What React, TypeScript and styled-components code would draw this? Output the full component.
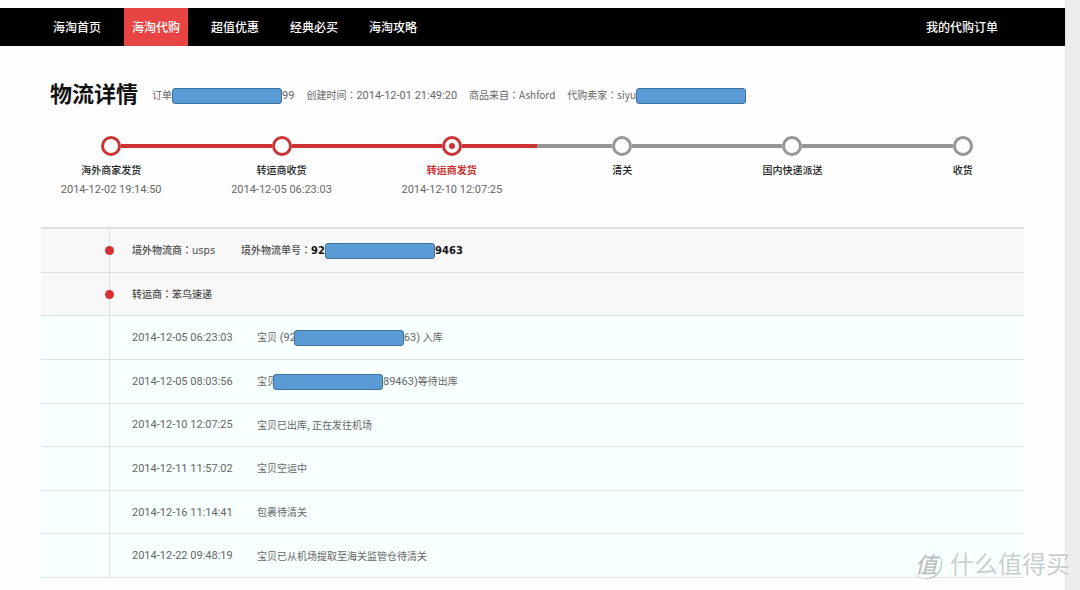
import React from "react";
import styled, { createGlobalStyle } from "styled-components";

const GlobalStyle = createGlobalStyle`
  * { box-sizing: border-box; }
  body {
    margin: 0;
    background: #fefefe;
    color: #666;
    font: 400 10px/20px "Noto Sans CJK SC", sans-serif;
  }
`;

const RED = "#cb3335";
const GRAY = "#969696";

const Page = styled.div`
  position: relative;
  display: flex;
  min-height: 100vh;
  overflow: hidden;
`;

const Content = styled.div`
  flex: 1;
  min-width: 0;
  padding-top: 8px;
`;

const Gutter = styled.div`
  width: 15px;
  background: #ededed;
  border-left: 1px solid #e2e2e2;
`;

const Nav = styled.nav`
  display: flex;
  gap: 15px;
  height: 38px;
  padding: 0 59px 0 45px;
  background: #000;
`;

const NavLink = styled.a<{ $active?: boolean; $end?: boolean }>`
  padding: 0 8px;
  margin-left: ${(p) => (p.$end ? "auto" : "0")};
  background: ${(p) => (p.$active ? "#e84443" : "transparent")};
  color: #fff;
  font-size: 12px;
  font-weight: 500;
  line-height: 38px;
  text-decoration: none;
  white-space: nowrap;
`;

const Header = styled.header`
  display: flex;
  align-items: center;
  gap: 14px;
  padding: 30px 0 0 50px;
`;

const Title = styled.h1`
  margin: 0;
  color: #111;
  font-size: 22px;
  font-weight: 700;
  line-height: 32px;
  white-space: nowrap;
`;

const MetaList = styled.div`
  display: flex;
  gap: 12px;
  padding-top: 6px;
  white-space: nowrap;
`;

const Latin = styled.span`
  font-family: Roboto, sans-serif;
  font-size: 11px;
`;

const Colon = styled.span`
  font-family: "Noto Sans CJK TC", sans-serif;
`;

const Redaction = styled.span<{ $overlap?: number }>`
  position: relative;
  display: inline-block;
  width: 110px;
  height: 16px;
  margin-left: ${(p) => -(p.$overlap ?? 0)}px;
  border: 1px solid #41719c;
  border-radius: 3px;
  background: #5b9bd5;
  vertical-align: middle;
`;

const Steps = styled.ol`
  display: flex;
  margin: 28px 17px 0 26px;
  padding: 0;
  list-style: none;
`;

const Step = styled.li`
  flex: 1;
  text-align: center;
  line-height: 19px;
`;

const Track = styled.div`
  display: flex;
  align-items: center;
  margin-bottom: 4px;
`;

const Segment = styled.span<{ $color: string }>`
  flex: 1;
  height: 4px;
  background: ${(p) => p.$color};
`;

const Ring = styled.span<{ $color: string }>`
  display: flex;
  align-items: center;
  justify-content: center;
  width: 20px;
  height: 20px;
  border: 3px solid ${(p) => p.$color};
  border-radius: 50%;
`;

const RingDot = styled.span`
  width: 6px;
  height: 6px;
  border-radius: 50%;
  background: ${RED};
`;

const StepName = styled.div<{ $current: boolean }>`
  color: ${(p) => (p.$current ? RED : "#222")};
  font-weight: ${(p) => (p.$current ? 700 : 500)};
`;

const Log = styled.table`
  width: calc(100% - 82px);
  height: 351px;
  margin: 28px 41px 0;
  border-top: 2px solid #dedede;
  border-collapse: separate;
  border-spacing: 0;
  table-layout: fixed;
`;

const Row = styled.tr<{ $kind: "carrier" | "event" }>`
  background: ${(p) => (p.$kind === "carrier" ? "#f8f8f8" : "#f8ffff")};
`;

const Cell = styled.td`
  height: 42px;
  padding: 0;
  border-bottom: 1px solid #dde2e2;
  white-space: nowrap;
`;

const RailCell = styled(Cell)`
  position: relative;
  border-right: 1px solid #dde2e2;
`;

const RailDot = styled.span`
  position: absolute;
  top: 50%;
  right: -5px;
  width: 9px;
  height: 9px;
  margin-top: -4px;
  border-radius: 50%;
  background: #d62f33;
`;

const TimeCell = styled(Cell)`
  padding-left: 22px;
`;

const Carrier = styled.div`
  display: flex;
  gap: 26px;
  color: #4c4c4c;
  font-weight: 500;
`;

const CarrierCode = styled.span`
  font-family: "DejaVu Sans", sans-serif;
`;

const TrackingNo = styled.strong`
  color: #111;
  font-family: "DejaVu Sans", sans-serif;
`;

const Watermark = styled.div`
  position: absolute;
  right: 10px;
  bottom: 10px;
  display: flex;
  align-items: center;
  gap: 9px;
  color: #c9cecf;
  font-size: 24px;
  line-height: 34px;
  text-shadow: -1px -1px 0 #fff;
`;

const Seal = styled.span`
  display: flex;
  align-items: center;
  justify-content: center;
  width: 30px;
  height: 30px;
  border: 1px solid #fff;
  border-radius: 50%;
  box-shadow: 1px 1px 1px #b9bfc0;
  color: #bcc2c3;
  font-size: 22px;
  font-style: italic;
  font-weight: 500;
`;

const navItems = ["海淘首页", "海淘代购", "超值优惠", "经典必买", "海淘攻略"];

const steps = [
  { name: "海外商家发货", time: "2014-12-02 19:14:50" },
  { name: "转运商收货", time: "2014-12-05 06:23:03" },
  { name: "转运商发货", time: "2014-12-10 12:07:25" },
  { name: "清关" },
  { name: "国内快递派送" },
  { name: "收货" },
];
const currentStep = 2;

const stepColor = (index: number) => (index <= currentStep ? RED : GRAY);

const events: { time: string; text: React.ReactNode }[] = [
  {
    time: "2014-12-05 06:23:03",
    text: (
      <>
        宝贝<Latin> (92</Latin>
        <Redaction $overlap={2} />
        <Latin>63) </Latin>入库
      </>
    ),
  },
  {
    time: "2014-12-05 08:03:56",
    text: (
      <>
        宝贝
        <Redaction $overlap={4} />
        <Latin>89463)</Latin>等待出库
      </>
    ),
  },
  { time: "2014-12-10 12:07:25", text: "宝贝已出库, 正在发往机场" },
  { time: "2014-12-11 11:57:02", text: "宝贝空运中" },
  { time: "2014-12-16 11:14:41", text: "包裹待清关" },
  { time: "2014-12-22 09:48:19", text: "宝贝已从机场提取至海关监管仓待清关" },
];

export default function App() {
  return (
    <>
      <GlobalStyle />
      <Page>
        <Content>
          <Nav>
            {navItems.map((item, i) => (
              <NavLink key={item} href="#" $active={i === 1}>
                {item}
              </NavLink>
            ))}
            <NavLink href="#" $end>
              我的代购订单
            </NavLink>
          </Nav>
          <Header>
            <Title>物流详情</Title>
            <MetaList>
              <span>
                订单
                <Redaction />
                <Latin>99</Latin>
              </span>
              <span>
                创建时间<Colon>：</Colon>
                <Latin>2014-12-01 21:49:20</Latin>
              </span>
              <span>
                商品来自<Colon>：</Colon>Ashford
              </span>
              <span>
                代购卖家<Colon>：</Colon>siyu
                <Redaction />
              </span>
            </MetaList>
          </Header>
          <Steps>
            {steps.map((step, i) => (
              <Step key={step.name}>
                <Track>
                  <Segment $color={i === 0 ? "transparent" : stepColor(i)} />
                  <Ring $color={stepColor(i)}>{i === currentStep && <RingDot />}</Ring>
                  <Segment $color={i === steps.length - 1 ? "transparent" : stepColor(i)} />
                </Track>
                <StepName $current={i === currentStep}>{step.name}</StepName>
                {step.time && <Latin as="time">{step.time}</Latin>}
              </Step>
            ))}
          </Steps>
          <Log>
            <colgroup>
              <col style={{ width: 69 }} />
              <col style={{ width: 147 }} />
              <col />
            </colgroup>
            <tbody>
              <Row $kind="carrier">
                <RailCell>
                  <RailDot />
                </RailCell>
                <TimeCell colSpan={2}>
                  <Carrier>
                    <span>
                      境外物流商<Colon>：</Colon>
                      <CarrierCode>usps</CarrierCode>
                    </span>
                    <span>
                      境外物流单号<Colon>：</Colon>
                      <TrackingNo>92</TrackingNo>
                      <Redaction />
                      <TrackingNo>9463</TrackingNo>
                    </span>
                  </Carrier>
                </TimeCell>
              </Row>
              <Row $kind="carrier">
                <RailCell>
                  <RailDot />
                </RailCell>
                <TimeCell colSpan={2}>
                  <Carrier>
                    <span>
                      转运商<Colon>：</Colon>笨鸟速递
                    </span>
                  </Carrier>
                </TimeCell>
              </Row>
              {events.map((event) => (
                <Row key={event.time} $kind="event">
                  <RailCell />
                  <TimeCell>
                    <Latin as="time">{event.time}</Latin>
                  </TimeCell>
                  <Cell>{event.text}</Cell>
                </Row>
              ))}
            </tbody>
          </Log>
        </Content>
        <Gutter />
        <Watermark>
          <Seal>值</Seal>
          <span>什么值得买</span>
        </Watermark>
      </Page>
    </>
  );
}
